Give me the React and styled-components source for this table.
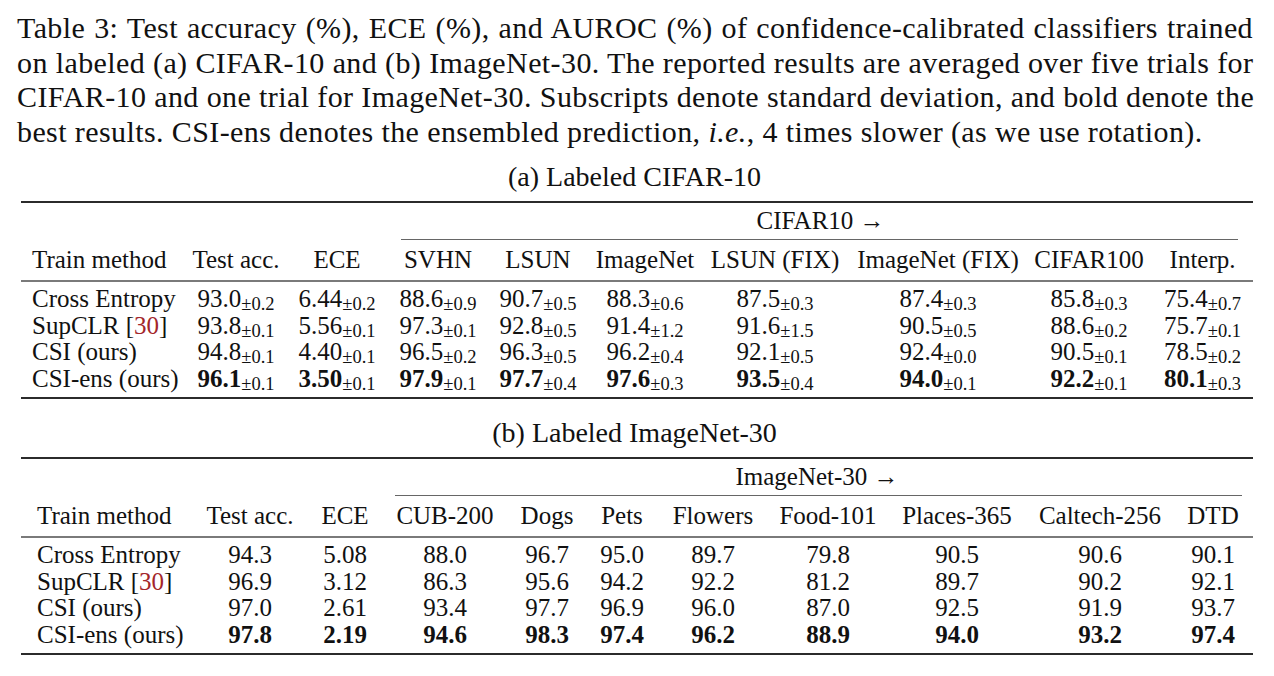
import React from 'react';
import styled, { createGlobalStyle } from 'styled-components';

const GlobalStyle = createGlobalStyle`
  html, body {
    margin: 0;
    padding: 0;
    background: #fff;
  }
  body {
    font-family: "Liberation Serif", "Times New Roman", serif;
    color: #111;
  }
`;

const Page = styled.div`
  width: 1274px;
  padding-top: 11px;
`;

const Caption = styled.div`
  margin: 0 21px 0 17px;
  font-size: 30px;
  letter-spacing: 0.4px;
  line-height: 34.5px;
`;

const CaptionLine = styled.div`
  white-space: nowrap;
  text-align: ${(p) => (p.$last ? 'left' : 'justify')};
  text-align-last: ${(p) => (p.$last ? 'left' : 'justify')};
`;

const SubTitle = styled.div`
  margin-top: ${(p) => p.$top}px;
  padding-right: 5px;
  text-align: center;
  font-size: 28px;
  line-height: 34px;
`;

const Table = styled.table`
  width: 1232px;
  margin: 7px 0 0 21px;
  border-collapse: collapse;
  table-layout: fixed;
  font-size: 25px;
  border-top: 2px solid #2b2b2b;
  border-bottom: 2px solid #2b2b2b;
`;

const SpanCell = styled.td`
  padding: 0;
  text-align: center;
`;

const SpanLabel = styled.div`
  line-height: 36px;
  padding-right: ${(p) => p.$shift}px;
`;

const Trim = styled.div`
  border-top: 1px solid #666;
  margin: 0 ${(p) => p.$right}px 0 ${(p) => p.$left}px;
`;

const HeadRow = styled.tr`
  border-bottom: 2px solid #7a7a7a;
`;

const Th = styled.th`
  height: 40px;
  padding: 0 0 0 ${(p) => p.$pl || 0}px;
  font-weight: normal;
  white-space: nowrap;
  text-align: ${(p) => (p.$left ? 'left' : 'center')};
`;

const BodyRow = styled.tr`
  & > td {
    padding-top: ${(p) => (p.$first ? 4 : 0)}px;
    padding-bottom: ${(p) => (p.$last ? 5 : 0)}px;
  }
`;

const Td = styled.td`
  padding-left: ${(p) => p.$pl || 0}px;
  padding-right: 0;
  line-height: 26.5px;
  white-space: nowrap;
  text-align: ${(p) => (p.$left ? 'left' : 'center')};
  font-weight: ${(p) => (p.$bold ? 700 : 400)};
`;

const Sub = styled.span`
  font-size: 18.5px;
  font-weight: 400;
  line-height: 0;
  vertical-align: -3px;
`;

const Cite = styled.span`
  color: #a3262a;
`;

const Method = ({ name }) =>
  name === 'SupCLR' ? (
    <>
      SupCLR [<Cite>30</Cite>]
    </>
  ) : (
    name
  );

const cifarCols = [167, 96, 106, 96, 104, 110, 150, 176, 126, 101];
const cifarHead = ['Train method', 'Test acc.', 'ECE', 'SVHN', 'LSUN', 'ImageNet', 'LSUN (FIX)', 'ImageNet (FIX)', 'CIFAR100', 'Interp.'];
const cifarRows = [
  ['Cross Entropy', ['93.0', '0.2'], ['6.44', '0.2'], ['88.6', '0.9'], ['90.7', '0.5'], ['88.3', '0.6'], ['87.5', '0.3'], ['87.4', '0.3'], ['85.8', '0.3'], ['75.4', '0.7']],
  ['SupCLR', ['93.8', '0.1'], ['5.56', '0.1'], ['97.3', '0.1'], ['92.8', '0.5'], ['91.4', '1.2'], ['91.6', '1.5'], ['90.5', '0.5'], ['88.6', '0.2'], ['75.7', '0.1']],
  ['CSI (ours)', ['94.8', '0.1'], ['4.40', '0.1'], ['96.5', '0.2'], ['96.3', '0.5'], ['96.2', '0.4'], ['92.1', '0.5'], ['92.4', '0.0'], ['90.5', '0.1'], ['78.5', '0.2']],
  ['CSI-ens (ours)', ['96.1', '0.1'], ['3.50', '0.1'], ['97.9', '0.1'], ['97.7', '0.4'], ['97.6', '0.3'], ['93.5', '0.4'], ['94.0', '0.1'], ['92.2', '0.1'], ['80.1', '0.3']],
];

const imagenetCols = [172, 114, 76, 124, 80, 70, 112, 118, 140, 146, 80];
const imagenetHead = ['Train method', 'Test acc.', 'ECE', 'CUB-200', 'Dogs', 'Pets', 'Flowers', 'Food-101', 'Places-365', 'Caltech-256', 'DTD'];
const imagenetRows = [
  ['Cross Entropy', '94.3', '5.08', '88.0', '96.7', '95.0', '89.7', '79.8', '90.5', '90.6', '90.1'],
  ['SupCLR', '96.9', '3.12', '86.3', '95.6', '94.2', '92.2', '81.2', '89.7', '90.2', '92.1'],
  ['CSI (ours)', '97.0', '2.61', '93.4', '97.7', '96.9', '96.0', '87.0', '92.5', '91.9', '93.7'],
  ['CSI-ens (ours)', '97.8', '2.19', '94.6', '98.3', '97.4', '96.2', '88.9', '94.0', '93.2', '97.4'],
];

const ResultTable = ({ cols, head, rows, spanLabel, pl, trim, spanShift }) => {
  const last = rows.length - 1;
  return (
    <Table>
      <colgroup>
        {cols.map((w, i) => (
          <col key={i} style={{ width: w }} />
        ))}
      </colgroup>
      <tbody>
        <tr>
          <SpanCell colSpan={3} />
          <SpanCell colSpan={cols.length - 3}>
            <SpanLabel $shift={spanShift}>{spanLabel} →</SpanLabel>
            <Trim $left={trim[0]} $right={trim[1]} />
          </SpanCell>
        </tr>
        <HeadRow>
          {head.map((h, i) => (
            <Th key={h} $left={i === 0} $pl={i === 0 ? pl : 0}>
              {h}
            </Th>
          ))}
        </HeadRow>
        {rows.map((row, r) => {
          const bold = r === last;
          return (
            <BodyRow key={r} $first={r === 0} $last={r === last}>
              <Td $left $pl={pl}>
                <Method name={row[0]} />
              </Td>
              {row.slice(1).map((v, i) =>
                Array.isArray(v) ? (
                  <Td key={i} $bold={bold}>
                    {v[0]}
                    <Sub>±{v[1]}</Sub>
                  </Td>
                ) : (
                  <Td key={i} $bold={bold}>
                    {v}
                  </Td>
                )
              )}
            </BodyRow>
          );
        })}
      </tbody>
    </Table>
  );
};

export default function App() {
  return (
    <Page>
      <GlobalStyle />
      <Caption>
        <CaptionLine>
          Table 3: Test accuracy (%), ECE (%), and AUROC (%) of confidence-calibrated classifiers trained
        </CaptionLine>
        <CaptionLine>
          on labeled (a) CIFAR-10 and (b) ImageNet-30. The reported results are averaged over five trials for
        </CaptionLine>
        <CaptionLine>
          CIFAR-10 and one trial for ImageNet-30. Subscripts denote standard deviation, and bold denote the
        </CaptionLine>
        <CaptionLine $last>
          best results. CSI-ens denotes the ensembled prediction, <i>i.e.</i>, 4 times slower (as we use rotation).
        </CaptionLine>
      </Caption>

      <SubTitle $top={11}>(a) Labeled CIFAR-10</SubTitle>
      <ResultTable
        cols={cifarCols}
        head={cifarHead}
        rows={cifarRows}
        spanLabel="CIFAR10"
        pl={11}
        trim={[11, 15]}
        spanShift={2}
      />

      <SubTitle $top={17}>(b) Labeled ImageNet-30</SubTitle>
      <ResultTable
        cols={imagenetCols}
        head={imagenetHead}
        rows={imagenetRows}
        spanLabel="ImageNet-30"
        pl={16}
        trim={[12, 11]}
        spanShift={2}
      />
    </Page>
  );
}
